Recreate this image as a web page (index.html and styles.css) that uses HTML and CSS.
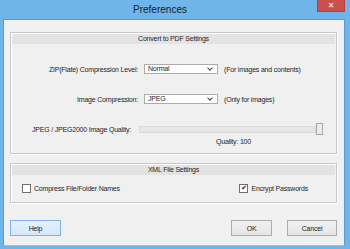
FILE: index.html
```html
<!DOCTYPE html>
<html lang="en">
<head>
  <meta charset="UTF-8" />
  <title>Preferences</title>
  <link rel="stylesheet" href="styles.css">
</head>
<body>
  <div class="window">
    <div class="titlebar">
      <span class="title">Preferences</span>
      <button class="close">&#x2715;</button>
    </div>

    <div class="client">
      <!-- PDF group -->
      <div class="group group-pdf">
        <div class="group-head">Convert to PDF Settings</div>
        <div class="group-body">
          <div class="row">
            <span class="label">ZIP(Flate) Compression Level:</span>
            <span class="select">Normal<span class="arrow"></span></span>
            <span class="note">(For images and contents)</span>
          </div>
          <div class="row row-two">
            <span class="label">Image Compression:</span>
            <span class="select">JPEG<span class="arrow"></span></span>
            <span class="note">(Only for images)</span>
          </div>
          <div class="quality-row">
            <span class="quality-label">JPEG / JPEG2000 Image Quality:</span>
            <div class="slider">
              <div class="track"></div>
              <div class="thumb"></div>
            </div>
          </div>
          <div class="quality-value">Quality: 100</div>
        </div>
      </div>

      <!-- XML group -->
      <div class="group group-xml">
        <div class="group-head">XML File Settings</div>
        <div class="check-row">
          <label class="check"><span class="box"></span>Compress File/Folder Names</label>
          <label class="check"><span class="box checked">&#x2714;</span>Encrypt Passwords</label>
        </div>
      </div>

      <div class="buttons">
        <button class="btn btn-help">Help</button>
        <div class="btn-right">
          <button class="btn btn-ok">OK</button>
          <button class="btn btn-cancel">Cancel</button>
        </div>
      </div>
    </div>
  </div>
</body>
</html>
```

FILE: styles.css
```css
* {
  box-sizing: border-box;
}

body {
  margin: 0;
  font-family: 'Liberation Sans', Arial, sans-serif;
  font-size: 7px;
  letter-spacing: -0.2px;
  color: #1e1e1e;
}

.window {
  width: 350px;
  height: 249px;
  background-color: #70b5ea;
  padding: 0 5px 3px 3px;
  display: flex;
  flex-direction: column;
}

.titlebar {
  height: 19px;
  display: flex;
  align-items: flex-start;
}

.title {
  flex: 1;
  text-align: center;
  font-size: 10px;
  letter-spacing: 0;
  padding-top: 4px;
  color: #1a1a1a;
}

.close {
  width: 28px;
  height: 12px;
  border: 1px solid #b64040;
  border-top: none;
  background-color: #c9504c;
  color: #fff;
  font-size: 8px;
  font-weight: bold;
  line-height: 10px;
  padding: 0;
  font-family: 'DejaVu Sans', sans-serif;
}

.client {
  flex: 1;
  background-color: #f0f0f0;
  border: 1px solid #5a9ad0;
  border-bottom-color: #8cc2ee;
  padding: 12px 7px 0 6px;
  display: flex;
  flex-direction: column;
}

.group {
  border: 1px solid #c8c8c8;
  box-shadow: inset 1px 1px 0 #ffffff, 1px 1px 0 #ffffff;
}

.group-head {
  height: 10px;
  background-color: #e3e3e3;
  text-align: center;
  line-height: 10px;
  margin: 1px 1px 0;
}

.group-pdf {
  height: 122px;
}

.group-body {
  padding-top: 20px;
}

.row {
  display: grid;
  grid-template-columns: 127px 74px auto;
  column-gap: 6px;
  align-items: center;
  height: 10px;
}

.row-two {
  margin-top: 20px;
}

.label {
  text-align: right;
}

.select {
  position: relative;
  height: 10px;
  background-color: #fff;
  border: 1px solid #acacac;
  padding-left: 3px;
  line-height: 8px;
}

.arrow {
  position: absolute;
  right: 5px;
  top: 1px;
  width: 4px;
  height: 4px;
  border-right: 1px solid #444;
  border-bottom: 1px solid #444;
  transform: rotate(45deg);
}

.quality-row {
  display: flex;
  align-items: center;
  margin-top: 19px;
  padding-left: 21px;
}

.quality-label {
  width: 107px;
  white-space: nowrap;
}

.slider {
  display: flex;
  align-items: center;
  width: 184px;
  height: 12px;
}

.track {
  flex: 1;
  height: 7px;
  background-color: #e6e6e6;
  border: 1px solid #dadada;
}

.thumb {
  width: 7px;
  height: 12px;
  background-color: #ececec;
  border: 1px solid #a8a8a8;
}

.quality-value {
  margin-top: 3px;
  padding-left: 205px;
}

.group-xml {
  height: 40px;
  margin-top: 9px;
}

.check-row {
  display: flex;
  justify-content: space-between;
  align-items: center;
  padding: 9px 28px 0 11px;
}

.check {
  display: flex;
  align-items: center;
  gap: 3px;
}

.box {
  width: 9px;
  height: 9px;
  border: 1px solid #707070;
  background-color: #fff;
  font-size: 7px;
  line-height: 7px;
  text-align: center;
  color: #222;
  font-family: 'DejaVu Sans', sans-serif;
}

.buttons {
  display: flex;
  justify-content: space-between;
  margin-top: 17px;
}

.btn {
  height: 16px;
  font-family: 'Liberation Sans', Arial, sans-serif;
  font-size: 7px;
  letter-spacing: -0.2px;
  color: #1e1e1e;
  border: 1px solid #acacac;
  background: linear-gradient(#f0f0f0, #e5e5e5);
  padding: 0;
}

.btn-help {
  width: 51px;
  border-color: #7eb4ea;
  background: linear-gradient(#e5f1fb, #d5e7f8);
}

.btn-right {
  display: flex;
  gap: 15px;
}

.btn-ok {
  width: 41px;
}

.btn-cancel {
  width: 50px;
}
```
